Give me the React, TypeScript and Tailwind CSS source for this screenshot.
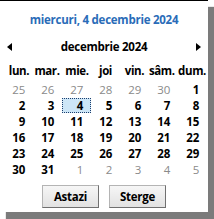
import React from "react";

const dayNames = ["lun.", "mar.", "mie.", "joi", "vin.", "sâm.", "dum."];
const dayPad = ["pl-[1px]", "pr-[1px]", "pl-[1px]", "", "", "pr-[5px]", "pr-[1px]"];

type Cell = { d: number; cur: boolean };

// Decembrie 2024 începe duminică; lunea de dinainte e 25 noiembrie.
const weeks: Cell[][] = [
  [25, 26, 27, 28, 29, 30].map((d) => ({ d, cur: false })).concat([{ d: 1, cur: true }]),
  [2, 3, 4, 5, 6, 7, 8].map((d) => ({ d, cur: true })),
  [9, 10, 11, 12, 13, 14, 15].map((d) => ({ d, cur: true })),
  [16, 17, 18, 19, 20, 21, 22].map((d) => ({ d, cur: true })),
  [23, 24, 25, 26, 27, 28, 29].map((d) => ({ d, cur: true })),
  [30, 31].map((d) => ({ d, cur: true })).concat([1, 2, 3, 4, 5].map((d) => ({ d, cur: false }))),
];

const btn =
  "w-[57px] h-[23px] bg-gradient-to-b from-[#f6f6f6] to-[#e2e2e2] border border-[#b4b4b4] border-r-[#707070] border-b-[#707070] text-black font-bold leading-[20px]";

export default function App() {
  return (
    <div className="w-[214px] h-[219px] bg-white overflow-hidden">
      <div
        className="w-[208px] h-[212px] bg-white border-t border-black shadow-[6px_7px_1px_#7b7b7b] flex flex-col text-[11.5px] font-bold tracking-[-0.25px]"
        style={{ fontFamily: '"Open Sans", "Noto Sans", sans-serif' }}
      >
        <div className="h-[28px] pt-[9px] text-center text-[#2a6cb8] leading-[20px]">
          miercuri, 4 decembrie 2024
        </div>

        <div className="mt-[8px] h-[20px] flex items-center justify-between px-[7px]">
          <svg width="5" height="8" viewBox="0 0 5 8">
            <path d="M5 0 L0 4 L5 8 Z" fill="#000" />
          </svg>
          <span className="text-black leading-[20px]">decembrie 2024</span>
          <svg width="5" height="8" viewBox="0 0 5 8">
            <path d="M0 0 L5 4 L0 8 Z" fill="#000" />
          </svg>
        </div>

        <div className="mt-[6px] pl-[4px] grid grid-cols-[repeat(7,29px)] h-[16px] leading-[16px] text-black tracking-[-0.4px]">
          {dayNames.map((n, i) => (
            <div key={n} className={"text-center " + dayPad[i]}>
              {n}
            </div>
          ))}
        </div>

        <div className="mt-[3px] pl-[4px] flex flex-col">
          {weeks.map((w, i) => (
            <div key={i} className="grid grid-cols-[repeat(7,29px)] h-[16px]">
              {w.map((c, j) => {
                const sel = c.cur && c.d === 4;
                return (
                  <div
                    key={j}
                    className={
                      "text-right pr-[7px] leading-[14px] h-[15px] border " +
                      (c.cur ? "text-black" : "text-[#8a8a8a] font-normal") +
                      (sel
                        ? " bg-[#cde6f7] border-dotted border-[#1d3f6e]"
                        : " border-transparent")
                    }
                  >
                    {c.d}
                  </div>
                );
              })}
            </div>
          ))}
        </div>

        <div className="mt-[7px] flex justify-center gap-[10px]">
          <button className={btn}>Astazi</button>
          <button className={btn}>Sterge</button>
        </div>
      </div>
    </div>
  );
}
